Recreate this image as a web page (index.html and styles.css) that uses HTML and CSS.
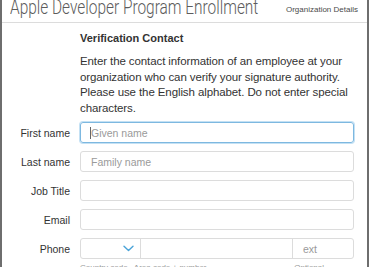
FILE: index.html
```html
<!DOCTYPE html>
<html>
<head>
<meta charset="utf-8">
<link rel="stylesheet" href="styles.css">
</head>
<body>
<div class="frame">
  <header class="topbar">
    <h1 class="title">Apple Developer Program Enrollment</h1>
    <span class="crumb">Organization Details</span>
  </header>
  <main class="content">
    <h2 class="section-title">Verification Contact</h2>
    <p class="intro">Enter the contact information of an employee at your organization who can verify your signature authority. Please use the English alphabet. Do not enter special characters.</p>
    <div class="form">
      <label class="label">First name</label>
      <div class="field focused"><span class="caret"></span><span class="ph">Given name</span></div>
      <label class="label">Last name</label>
      <div class="field"><span class="ph">Family name</span></div>
      <label class="label">Job Title</label>
      <div class="field"></div>
      <label class="label">Email</label>
      <div class="field"></div>
      <label class="label">Phone</label>
      <div class="phone">
        <div class="seg seg-code">
          <svg class="chev" width="11" height="7" viewBox="0 0 11 7"><path d="M1 1.2 L5.5 5.5 L10 1.2" fill="none" stroke="#4aa3d8" stroke-width="1.4" stroke-linecap="round" stroke-linejoin="round"/></svg>
        </div>
        <div class="seg seg-num"></div>
        <div class="seg seg-ext"><span class="ph">ext</span></div>
      </div>
      <span></span>
      <div class="hints"><span>Country code &nbsp; Area code + number</span><span>Optional</span></div>
    </div>
  </main>
</div>
</body>
</html>
```

FILE: styles.css
```css
* { box-sizing: border-box; margin: 0; padding: 0; }
html, body { background: #fff; }
body { width: 370px; height: 267px; overflow: hidden; font-family: "Liberation Sans", Arial, sans-serif; color: #333; }
.frame {
  width: 369px; height: 267px; overflow: hidden;
  border-left: 2px solid #6e6e6e; border-right: 2px solid #6e6e6e;
}
.topbar {
  height: 23px; border-bottom: 1px solid #dcdcdc;
  display: flex; align-items: flex-end; justify-content: space-between;
  padding: 0 9px 0 8px; overflow: hidden;
}
.title {
  font-family: Roboto, "Liberation Sans", sans-serif;
  font-weight: 300; font-size: 21px; line-height: 22px; color: #5c5c5c;
  margin-bottom: 4px; white-space: nowrap;
  transform: scaleX(0.735); transform-origin: left center;
  width: 250px;
}
.crumb { font-size: 8px; color: #4a4a4a; margin-bottom: 8px; white-space: nowrap; }
.content { padding-left: 10px; }
.section-title { font-size: 11px; font-weight: 700; color: #333; margin: 8px 0 0 68px; line-height: 14px; }
.intro { margin: 9px 0 0 68px; width: 276px; font-size: 11.5px; letter-spacing: -0.1px; line-height: 15.5px; color: #333; }
.form {
  display: grid; grid-template-columns: 58px 274px; column-gap: 10px; row-gap: 8px;
  margin-top: 6px; align-items: center;
}
.label { font-size: 10.5px; text-align: right; color: #333; }
.field {
  height: 21px; border: 1px solid #dcdcdc; border-radius: 3px;
  display: flex; align-items: center; padding-left: 10px;
}
.field.focused { border-color: #7db8e0; box-shadow: 0 0 0 1px #c4e1f4; }
.caret { width: 1px; height: 12px; background: #666; margin-left: -1px; }
.ph { font-size: 10.5px; color: #9a9a9a; }
.phone { display: flex; height: 21px; border: 1px solid #dcdcdc; border-radius: 3px; }
.seg { display: flex; align-items: center; height: 100%; }
.seg-code { width: 60px; justify-content: flex-end; padding-right: 6px; border-right: 1px solid #dcdcdc; }
.seg-num { flex: 1; border-right: 1px solid #dcdcdc; }
.seg-ext { width: 60px; padding-left: 10px; }
.hints { display: flex; justify-content: space-between; padding-right: 30px; font-size: 8px; color: #999; margin-top: -4px; }
```
